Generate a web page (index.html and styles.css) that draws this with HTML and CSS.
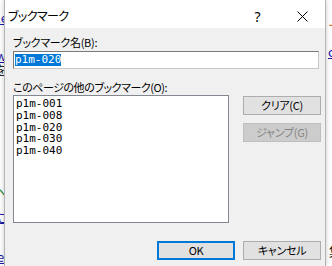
FILE: index.html
```html
<!DOCTYPE html>
<html lang="ja">
<head>
  <meta charset="UTF-8">
  <meta name="viewport" content="width=device-width, initial-scale=1.0">
  <title>ブックマーク</title>
  <link rel="stylesheet" href="styles.css">
</head>
<body>
  <!-- page behind the dialog -->
  <div class="page">
    <span class="frag link" style="top:12px;left:-3px">le</span>
    <span class="frag link" style="top:50px;left:-4px">w</span>
    <span class="frag" style="top:64px;left:-5px">を</span>
    <span class="frag green" style="top:186px;left:-6px">へ</span>
    <span class="frag link" style="top:211px;left:-6px">に</span>
    <span class="frag link" style="top:251px;left:-3px">e</span>
    <span class="frag orange" style="top:19px;left:328px">ー</span>
    <span class="frag link" style="top:46px;left:328px">c</span>
    <span class="frag" style="top:245px;left:329px">集</span>
  </div>

  <div class="dialog">
    <div class="titlebar">
      <span class="title">ブックマーク</span>
      <span class="tb-btn help">?</span>
      <span class="tb-btn close">
        <svg width="11" height="11" viewBox="0 0 11 11">
          <path d="M0.5 0.5 L10.5 10.5 M10.5 0.5 L0.5 10.5" stroke="#000" stroke-width="1" fill="none"/>
        </svg>
      </span>
    </div>

    <div class="dialog-body">
      <label class="label first">ブックマーク名(B):</label>
      <div class="textbox"><span class="sel">p1m-020</span></div>

      <label class="label second">このページの他のブックマーク(O):</label>
      <div class="list-row">
        <ul class="listbox">
          <li>p1m-001</li>
          <li>p1m-008</li>
          <li>p1m-020</li>
          <li>p1m-030</li>
          <li>p1m-040</li>
        </ul>
        <div class="side-buttons">
          <button class="btn">クリア(C)</button>
          <button class="btn" disabled>ジャンプ(G)</button>
        </div>
      </div>

      <div class="footer">
        <button class="btn default">OK</button>
        <button class="btn">キャンセル</button>
      </div>
    </div>
  </div>
</body>
</html>
```

FILE: styles.css
```css
html, body {
  margin: 0;
  padding: 0;
}
body {
  width: 332px;
  height: 266px;
  overflow: hidden;
  position: relative;
  background: #fff;
  font-family: "Noto Sans CJK JP", "Noto Sans", sans-serif;
  font-size: 11px;
  color: #000;
}
.page {
  position: absolute;
  inset: 0;
}
.frag {
  position: absolute;
  font-size: 13px;
  line-height: 12px;
  color: #222;
}
.frag.link {
  color: #1a1aa6;
  text-decoration: underline;
}
.frag.green {
  color: #2e8b3e;
}
.frag.orange {
  color: #e07a3a;
}

.dialog {
  position: absolute;
  left: 4px;
  top: 0;
  width: 320px;
  height: 266px;
  background: #f0f0f0;
  border-left: 1px solid #b4b4b4;
  border-right: 1px solid #b4b4b4;
  box-shadow: 0 0 5px rgba(0, 0, 0, 0.22);
}
.titlebar {
  height: 28px;
  background: #fff;
  display: flex;
  align-items: center;
}
.title {
  flex: 1;
  padding-left: 3px;
  padding-top: 2px;
  font-size: 12px;
  font-feature-settings: "palt";
  letter-spacing: -0.6px;
}
.tb-btn {
  width: 45px;
  height: 28px;
  display: flex;
  align-items: center;
  justify-content: center;
  padding-top: 4px;
  box-sizing: border-box;
}
.help {
  font-family: "Noto Sans", sans-serif;
  font-size: 14px;
}

.dialog-body {
  padding: 0 4px 0 8px;
  display: flex;
  flex-direction: column;
}
.label {
  display: block;
  font-feature-settings: "palt";
  letter-spacing: -0.3px;
  line-height: 14px;
}
.label.first {
  margin-top: 7px;
}
.label.second {
  margin-top: 11px;
  letter-spacing: -0.45px;
}
.textbox {
  margin-top: 2px;
  margin-right: 2px;
  background: #fff;
  border: 1px solid #7a7a7a;
  border-right-color: #c8c8c8;
  border-bottom-color: #c8c8c8;
  padding: 2px 0 0 1px;
  font-family: "DejaVu Sans Mono", monospace;
  font-size: 11px;
  line-height: 12px;
  height: 14px;
}
.sel {
  display: inline-block;
  background: #0078d7;
  color: #fff;
}

.list-row {
  display: flex;
  gap: 14px;
  margin-top: 1px;
}
.listbox {
  list-style: none;
  margin: 0;
  width: 212px;
  height: 124px;
  padding: 2px 0 0 2px;
  background: #fff;
  border: 1px solid #828790;
  font-family: "DejaVu Sans Mono", monospace;
  font-size: 11px;
  line-height: 11.75px;
}
.side-buttons {
  display: flex;
  flex-direction: column;
  gap: 8px;
  margin-top: 1px;
}
.btn {
  width: 78px;
  height: 19px;
  margin: 0;
  padding: 0;
  background: #e1e1e1;
  border: 1px solid #adadad;
  font-family: "Noto Sans CJK JP", "Noto Sans", sans-serif;
  font-size: 11px;
  font-feature-settings: "palt";
  letter-spacing: -0.3px;
  line-height: 15px;
  color: #000;
}
.btn:disabled {
  background: #cccccc;
  border-color: #bfbfbf;
  color: #838383;
}
.btn.default {
  border: 2px solid #0078d7;
}
.footer {
  display: flex;
  justify-content: flex-end;
  gap: 8px;
  margin-top: 18px;
}
```
